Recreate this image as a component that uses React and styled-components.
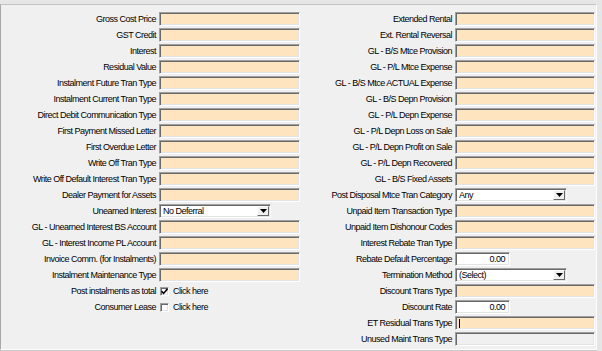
import styled, { createGlobalStyle } from "styled-components";

const GlobalStyle = createGlobalStyle`
  html, body {
    margin: 0;
    padding: 0;
    background: #e6e6e6;
  }
  body {
    font-family: "Liberation Sans Narrow", "Liberation Sans", Arial, sans-serif;
    font-size: 9px;
    letter-spacing: -0.5px;
    color: #000;
  }
`;

const leftFields = [
  { label: "Gross Cost Price" },
  { label: "GST Credit" },
  { label: "Interest" },
  { label: "Residual Value" },
  { label: "Instalment Future Tran Type" },
  { label: "Instalment Current Tran Type" },
  { label: "Direct Debit Communication Type" },
  { label: "First Payment Missed Letter" },
  { label: "First Overdue Letter" },
  { label: "Write Off Tran Type" },
  { label: "Write Off Default Interest Tran Type" },
  { label: "Dealer Payment for Assets" },
  { label: "Unearned Interest", type: "select", value: "No Deferral" },
  { label: "GL - Unearned Interest BS Account" },
  { label: "GL - Interest Income PL Account" },
  { label: "Invoice Comm. (for Instalments)" },
  { label: "Instalment Maintenance Type" },
  { label: "Post instalments as total", type: "check", checked: true },
  { label: "Consumer Lease", type: "check", checked: false },
];

const rightFields = [
  { label: "Extended Rental" },
  { label: "Ext. Rental Reversal" },
  { label: "GL - B/S Mtce Provision" },
  { label: "GL - P/L Mtce Expense" },
  { label: "GL - B/S Mtce ACTUAL Expense" },
  { label: "GL - B/S Depn Provision" },
  { label: "GL - P/L Depn Expense" },
  { label: "GL - P/L Depn Loss on Sale" },
  { label: "GL - P/L Depn Profit on Sale" },
  { label: "GL - P/L Depn Recovered" },
  { label: "GL - B/S Fixed Assets" },
  { label: "Post Disposal Mtce Tran Category", type: "select", value: "Any" },
  { label: "Unpaid Item Transaction Type" },
  { label: "Unpaid Item Dishonour Codes" },
  { label: "Interest Rebate Tran Type" },
  { label: "Rebate Default Percentage", type: "number", value: "0.00" },
  { label: "Termination Method", type: "select", value: "(Select)" },
  { label: "Discount Trans Type" },
  { label: "Discount Rate", type: "number", value: "0.00" },
  { label: "ET Residual Trans Type", type: "caret" },
  { label: "Unused Maint Trans Type", type: "disabled" },
];

function Field({ field }) {
  switch (field.type) {
    case "select":
      return (
        <Select>
          <SelectText>{field.value}</SelectText>
          <DropButton>
            <svg width="7" height="4" viewBox="0 0 7 4">
              <path d="M0 0h7L3.5 4z" fill="#000" />
            </svg>
          </DropButton>
        </Select>
      );
    case "number":
      return <NumberBox>{field.value}</NumberBox>;
    case "check":
      return (
        <CheckRow>
          <CheckBox>
            {field.checked && (
              <svg width="7" height="7" viewBox="0 0 7 7">
                <path d="M0.5 3.2 L2.6 5.4 L6.5 0.8" stroke="#000" strokeWidth="1.6" fill="none" />
              </svg>
            )}
          </CheckBox>
          Click here
        </CheckRow>
      );
    case "caret":
      return (
        <TextBox>
          <Caret />
        </TextBox>
      );
    case "disabled":
      return <TextBox $disabled />;
    default:
      return <TextBox />;
  }
}

function Column({ fields, labelWidth, inputWidth }) {
  return (
    <Grid $labelWidth={labelWidth} $inputWidth={inputWidth}>
      {fields.map((f) => (
        <Row key={f.label}>
          <Label>{f.label}</Label>
          <Field field={f} />
        </Row>
      ))}
    </Grid>
  );
}

export default function App() {
  return (
    <>
      <GlobalStyle />
      <Page>
        <Panel>
          <Column fields={leftFields} labelWidth={155} inputWidth={141} />
          <Column fields={rightFields} labelWidth={152} inputWidth={140} />
        </Panel>
      </Page>
    </>
  );
}

const Page = styled.div`
  width: 602px;
  height: 351px;
  padding-top: 4px;
  box-sizing: border-box;
`;

const Panel = styled.div`
  width: 597px;
  height: 346px;
  box-sizing: border-box;
  background: #f0f0f0;
  border-top: 1px solid #c4c4c4;
  border-left: 1px solid #a8a8a8;
  border-right: 1px solid #fdfdfd;
  border-bottom: 1px solid #fdfdfd;
  box-shadow: 0 1px 0 #c8c8c8;
  padding-top: 7px;
  display: flex;
  align-items: flex-start;
`;

const Grid = styled.div`
  display: grid;
  grid-template-columns: ${(p) => p.$labelWidth}px ${(p) => p.$inputWidth}px;
  grid-auto-rows: 14px;
  row-gap: 2px;
  column-gap: 3px;
`;

const Row = styled.div`
  display: contents;
`;

const Label = styled.div`
  text-align: right;
  line-height: 14px;
  white-space: nowrap;
`;

const sunken = `
  box-sizing: border-box;
  border: 1px solid;
  border-color: #a0a0a0 #ffffff #ffffff #a0a0a0;
  box-shadow: inset 1px 1px 0 #696969, inset -1px -1px 0 #e3e3e3;
`;

const TextBox = styled.div`
  ${sunken}
  height: 14px;
  background: ${(p) => (p.$disabled ? "#f0f0f0" : "#fee5bf")};
  position: relative;
`;

const Caret = styled.span`
  position: absolute;
  left: 3px;
  top: 2px;
  width: 1px;
  height: 9px;
  background: #000;
`;

const Select = styled.div`
  ${sunken}
  width: 112px;
  height: 14px;
  background: #fff;
  display: flex;
  align-items: center;
  padding: 0 1px 0 3px;
`;

const SelectText = styled.span`
  flex: 1;
  line-height: 12px;
`;

const DropButton = styled.span`
  width: 12px;
  height: 10px;
  box-sizing: border-box;
  background: #f0f0f0;
  border: 1px solid;
  border-color: #fff #696969 #696969 #fff;
  display: flex;
  align-items: center;
  justify-content: center;
`;

const NumberBox = styled.div`
  ${sunken}
  width: 55px;
  height: 14px;
  background: #fff;
  text-align: right;
  line-height: 12px;
  padding-right: 4px;
`;

const CheckRow = styled.div`
  display: flex;
  align-items: center;
  gap: 4px;
  padding-left: 1px;
  line-height: 14px;
`;

const CheckBox = styled.span`
  ${sunken}
  width: 9px;
  height: 9px;
  background: #fff;
  display: flex;
  align-items: center;
  justify-content: center;
`;
